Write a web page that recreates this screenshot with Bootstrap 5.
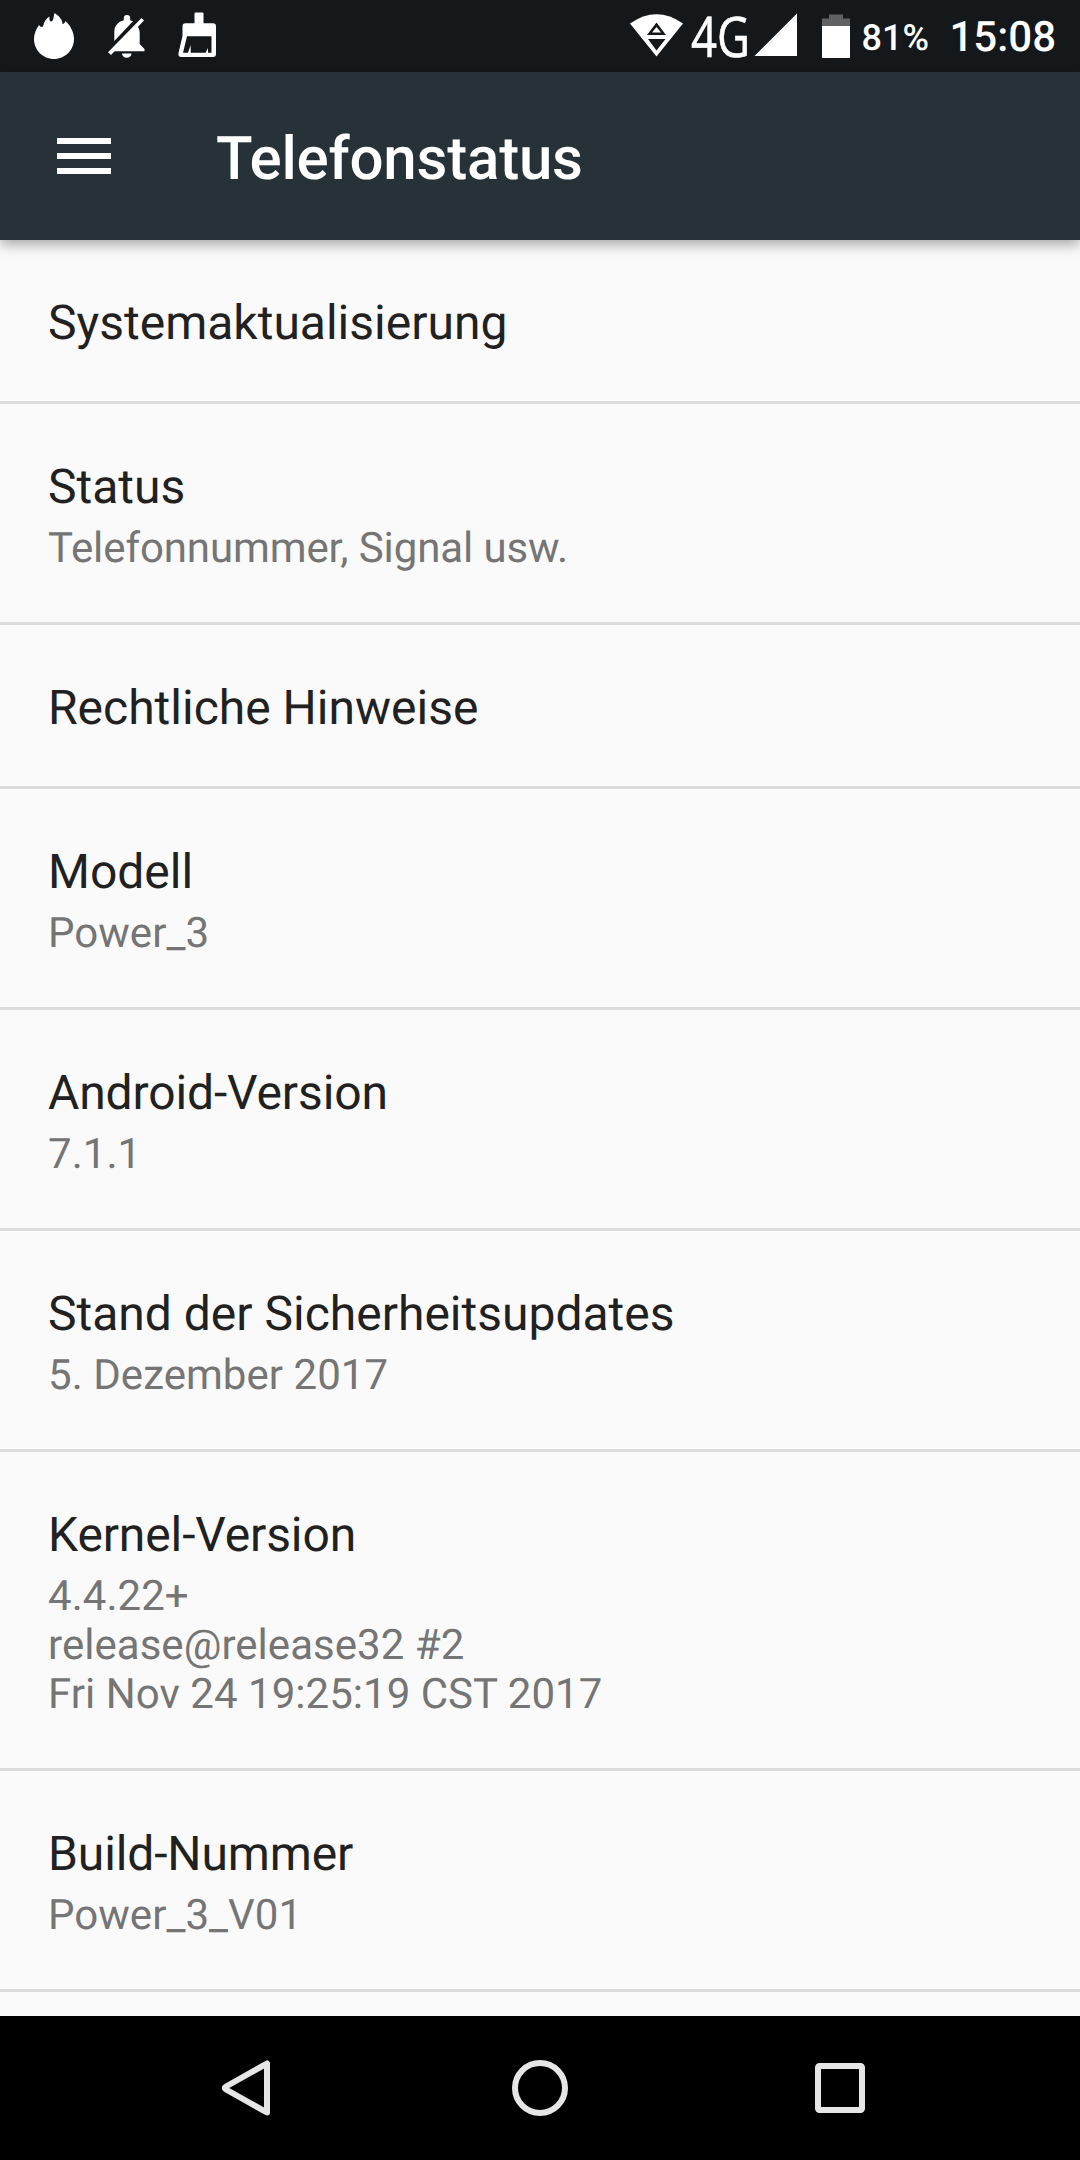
<!DOCTYPE html>
<html lang="de">
<head>
<meta charset="utf-8">
<meta name="viewport" content="width=device-width, initial-scale=1">
<title>Telefonstatus</title>
<link href="https://cdn.jsdelivr.net/npm/bootstrap@5.3.0/dist/css/bootstrap.min.css" rel="stylesheet">
<style>
  body { font-family: Roboto, "Noto Sans", sans-serif; background: #fafafa; text-rendering: geometricPrecision; }
  svg { display: block; flex: none; overflow: visible; }
  .phone { width: 1080px; height: 2160px; }
  .status-bar { height: 72px; background: #14181b; padding: 0 24px 0 34px; }
  .battery-level { font-size: 36px; font-weight: 500; line-height: 72px; margin: 2px 20.5px 0 11px; }
  .clock { font-size: 42px; font-weight: 500; line-height: 72px; margin-top: 2px; }
  .app-bar { height: 168px; background: #263238; z-index: 2; padding: 0 57px; box-shadow: 0 5px 12px rgba(0,0,0,.32); }
  .menu-btn { margin-right: 105px; }
  .app-title { font-size: 60px; font-weight: 500; line-height: 70px; padding-top: 5px; letter-spacing: -.2px; }
  .settings .list-group-item { background: #fafafa; border: 0; border-bottom: 3px solid #dcdcdc; padding: 55px 48px 50px; }
  .item-title { font-size: 48px; line-height: 56px; color: #212121; }
  .item-sub { font-size: 42px; line-height: 49px; color: #757575; margin: 9px 0 -1px; letter-spacing: .04px; }
  .item-title.tight { letter-spacing: -.12px; }
  .item-sub.tight { letter-spacing: -.1px; }
  .nav-keys { height: 144px; }
</style>
</head>
<body>
<div class="phone d-flex flex-column overflow-hidden">
  <header class="status-bar d-flex justify-content-between text-white flex-shrink-0">
    <div class="d-flex">
      <svg width="40" height="72" viewBox="34 0 40 72" fill="#fff"><path d="M54 59C43 59 34 50 34 39C34 34 36 29 39 25C40 27 42 27.500 43 26.500C44 22 46 18.500 49.500 16.500C49 20 50 22 51.500 21.500C54 20 53.500 16 54.500 13C59 16 62.500 19.500 62.500 24C64 24 65 22.500 65.500 21C70 25 74 32 74 39C74 50 65 59 54 59Z"/></svg>
      <svg class="ms-4" width="60" height="72" viewBox="98 0 60 72" fill="#fff"><path d="M123.800 20.200V18.300a3.200 3.200 0 0 1 6.400 0V20.200L133 21.300L114.300 41V32C114.300 26 118 21.500 123.800 20.200Z"/><path d="M136.800 25.500C139 28 139.700 30 139.700 33V44L144.500 49V51.300H112.500ZM122 53.500H131.500A4.750 4.300 0 0 1 122 53.500Z"/><path d="M141.500 18L144 20.600L111 55L108 52.200Z"/></svg>
      <svg class="ms-3" width="50" height="72" viewBox="174 0 50 72"><path fill="#fff" fill-rule="evenodd" d="M195.500 12.500H202.500Q203.500 12.500 203.500 13.500V23.300H213Q216 23.300 216 26.500V54Q216 57 213 57H181.500Q177.700 57 178.500 53L182.500 36V26.500Q182.500 23.300 185.500 23.300H194.500V13.500Q194.500 12.500 195.500 12.500ZM187 36.300L183 52.700H188L190.700 45V52.700H205.500L208 48V52.700H211.500V36.300Z"/></svg>
    </div>
    <div class="d-flex">
      <svg width="53" height="72" viewBox="629 0 53 72"><path fill="#fff" d="M629 23.500Q655.500 5 682 23.500L655.500 56.500Z"/><path fill="#14181b" d="M655.500 22.500L665 35H646ZM647 39H664.500L655.500 50.500Z"/><path fill="#fff" d="M655.500 27L660 32.500H651Z"/></svg>
      <svg width="72" height="72" viewBox="682 0 72 72"><text x="690" y="57" font-family="Open Sans, Noto Sans, sans-serif" font-size="56" fill="#fff" stroke="#fff" stroke-width=".6" textLength="59" lengthAdjust="spacingAndGlyphs">4G</text></svg>
      <svg width="42" height="72" viewBox="754 0 42 72"><path fill="#fff" d="M796 13.500V56H753.500Z"/></svg>
      <svg width="54" height="72" viewBox="796 0 54 72"><path fill="#606162" d="M821 18.500H828V14.500H842V18.500H849V26H821Z"/><path fill="#fff" d="M821 26H849V58H821Z"/></svg>
      <span class="battery-level">81%</span>
      <span class="clock">15:08</span>
    </div>
  </header>

  <nav class="app-bar d-flex align-items-center text-white position-relative flex-shrink-0">
    <button class="menu-btn btn p-0 border-0 rounded-0" type="button" aria-label="Menü">
      <svg width="54" height="36" viewBox="0 0 54 36" fill="#fff"><path d="M0 0h54v6H0zM0 15h54v6H0zM0 30h54v6H0z"/></svg>
    </button>
    <h1 class="app-title m-0">Telefonstatus</h1>
  </nav>

  <main class="settings flex-grow-1 overflow-hidden">
    <ul class="list-group rounded-0">
      <li class="list-group-item"><div class="item-title">Systemaktualisierung</div></li>
      <li class="list-group-item"><div class="item-title">Status</div><div class="item-sub tight">Telefonnummer, Signal usw.</div></li>
      <li class="list-group-item"><div class="item-title">Rechtliche Hinweise</div></li>
      <li class="list-group-item"><div class="item-title">Modell</div><div class="item-sub">Power_3</div></li>
      <li class="list-group-item"><div class="item-title tight">Android-Version</div><div class="item-sub">7.1.1</div></li>
      <li class="list-group-item"><div class="item-title">Stand der Sicherheitsupdates</div><div class="item-sub">5. Dezember 2017</div></li>
      <li class="list-group-item"><div class="item-title tight">Kernel-Version</div><div class="item-sub">4.4.22+<br>release@release32 #2<br>Fri Nov 24 19:25:19 CST 2017</div></li>
      <li class="list-group-item rounded-0"><div class="item-title tight">Build-Nummer</div><div class="item-sub">Power_3_V01</div></li>
    </ul>
  </main>

  <footer class="nav-keys bg-black d-flex justify-content-center flex-shrink-0">
    <svg width="300" height="144" viewBox="90 0 300 144" fill="none" stroke="#e6e6e6" stroke-width="6" stroke-linejoin="round"><path d="M267 47.500V96.500L226 73.500Q223.500 72 226 70.500Z"/></svg>
    <svg width="300" height="144" viewBox="390 0 300 144" fill="none" stroke="#e6e6e6" stroke-width="6"><circle cx="540" cy="72" r="25"/></svg>
    <svg width="300" height="144" viewBox="690 0 300 144" fill="none" stroke="#e6e6e6" stroke-width="6"><rect x="818" y="50" width="44" height="44" rx="1.500"/></svg>
  </footer>
</div>
<script src="https://cdn.jsdelivr.net/npm/bootstrap@5.3.0/dist/js/bootstrap.bundle.min.js"></script>
</body>
</html>
